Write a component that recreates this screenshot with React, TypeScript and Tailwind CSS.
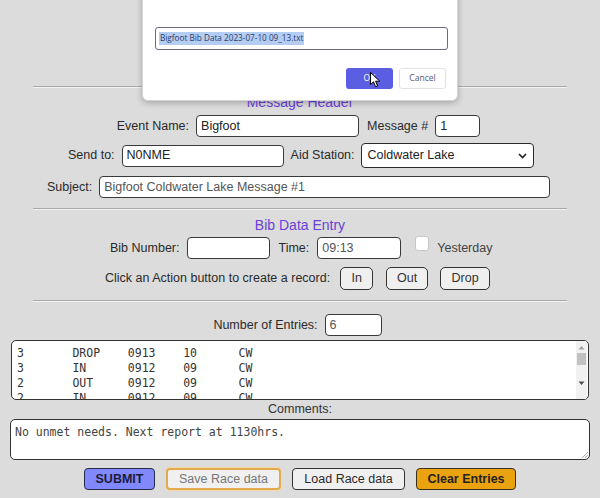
import React from "react";

const inputCls =
  "h-[22px] bg-white border border-[#3a3a3a] rounded-[4px] px-[4px] flex items-center text-[12.5px]";

function Field({ w, value, dim }: { w: string; value?: string; dim?: boolean }) {
  return (
    <div className={`${inputCls} ${w} ${dim ? "text-[#555]" : "text-[#222]"}`}>{value}</div>
  );
}

function Hr() {
  return (
    <div className="mx-[33px] flex flex-col">
      <div className="h-px bg-[#a9a9a9]" />
      <div className="h-px bg-[#f3f3f3]" />
    </div>
  );
}

export default function App() {
  const entries = [
    ["3", "DROP", "0913", "10", "CW"],
    ["3", "IN", "0912", "09", "CW"],
    ["2", "OUT", "0912", "09", "CW"],
    ["2", "IN", "0912", "09", "CW"],
  ];
  return (
    <div
      className="relative w-[600px] h-[498px] overflow-hidden bg-[#dcdcdc] text-[12.5px] text-[#2a2a2a]"
      style={{ fontFamily: '"Liberation Sans", Arial, sans-serif' }}
    >
      <div className="flex flex-col">
        <div className="h-[86px]" />
        <Hr />
        {/* Message Header */}
        <div className="h-[27px] flex items-center justify-center pt-[1px] text-[14px] text-[#6b3fd9]">
          Message Header
        </div>
        {/* Row 1 */}
        <div className="h-[22px] flex items-center justify-center gap-[7px] pr-[3px]">
          <span>Event Name:</span>
          <Field w="w-[163px]" value="Bigfoot" />
          <span className="ml-[1px]">Message #</span>
          <Field w="w-[45px]" value="1" />
        </div>
        {/* Row 2 */}
        <div className="mt-[6px] h-[25px] flex items-center pl-[68px] gap-[7px]">
          <span>Send to:</span>
          <Field w="w-[162px]" value="N0NME" />
          <span>Aid Station:</span>
          <div className="ml-[-1px] h-[25px] w-[173px] bg-white border-[1.5px] border-[#2a2a2a] rounded-[4px] flex items-center justify-between pl-[6px] pr-[6px] text-[#222]">
            <span>Coldwater Lake</span>
            <svg width="9" height="6" viewBox="0 0 9 6">
              <path d="M1 1 L4.5 4.5 L8 1" fill="none" stroke="#222" strokeWidth="1.6" />
            </svg>
          </div>
        </div>
        {/* Row 3 */}
        <div className="mt-[8px] h-[22px] flex items-center pl-[47px] gap-[7px]">
          <span>Subject:</span>
          <Field w="w-[451px]" value="Bigfoot Coldwater Lake Message #1" dim />
        </div>
        <div className="h-[10px]" />
        <Hr />
        {/* Bib Data Entry */}
        <div className="h-[27px] flex items-center justify-center pt-[3px] text-[14px] text-[#6b3fd9]">
          Bib Data Entry
        </div>
        <div className="h-[22px] flex items-center pl-[110px] gap-[8px]">
          <span>Bib Number:</span>
          <Field w="w-[83px]" />
          <span>Time:</span>
          <Field w="w-[84px]" value="09:13" dim />
          <div className="ml-[6px] self-start mt-[-1px] w-[14px] h-[15px] bg-white border border-[#c8c8c8] rounded-[3px]" />
          <span className="text-[#444]">Yesterday</span>
        </div>
        <div className="mt-[8px] h-[23px] flex items-center pl-[105px] gap-[7px]">
          <span className="mr-[3px]">Click an Action button to create a record:</span>
          <button className="h-[23px] w-[33px] bg-[#efefef] border border-[#333] rounded-[5px] text-[12.5px] text-[#333]">
            In
          </button>
          <button className="ml-[6px] h-[23px] w-[42px] bg-[#efefef] border border-[#333] rounded-[5px] text-[12.5px] text-[#333]">
            Out
          </button>
          <button className="ml-[5px] h-[23px] w-[50px] bg-[#efefef] border border-[#333] rounded-[5px] text-[12.5px] text-[#333]">
            Drop
          </button>
        </div>
        <div className="h-[10px]" />
        <Hr />
        <div className="mt-[12px] h-[22px] flex items-center justify-center gap-[7px] pr-[5px]">
          <span>Number of Entries:</span>
          <Field w="w-[57px]" value="6" dim />
        </div>
        {/* Entries list */}
        <div className="mt-[4px] mx-[11px] h-[60px] bg-white border-[1.5px] border-[#333] rounded-[5px] overflow-hidden flex">
          <pre
            className="flex-1 pl-[5px] pt-[5px] text-[11.5px] leading-[15px] text-[#333] [tab-size:8]"
            style={{ fontFamily: '"DejaVu Sans Mono", monospace' }}
          >
            {entries.map((r) => r.join("\t")).join("\n")}
          </pre>
          <div className="w-[11px] mr-[1px] bg-[#f1f1f1] flex flex-col items-center">
            <svg width="7" height="5" viewBox="0 0 7 5" className="mt-[4px]">
              <path d="M0.5 4.5 L3.5 1 L6.5 4.5 Z" fill="#a0a0a0" />
            </svg>
            <div className="mt-[3px] w-[9px] h-[12px] bg-[#c1c1c1]" />
            <svg width="7" height="5" viewBox="0 0 7 5" className="mt-[16px]">
              <path d="M0.5 0.5 L3.5 4 L6.5 0.5 Z" fill="#505050" />
            </svg>
          </div>
        </div>
        <div className="h-[19px] flex items-center justify-center text-[#333]">Comments:</div>
        <div className="mx-[10px] h-[41px] bg-white border-[1.5px] border-[#333] rounded-[5px] relative">
          <div
            className="pl-[4px] pt-[5px] text-[11.5px] leading-[15px] text-[#444]"
            style={{ fontFamily: '"DejaVu Sans Mono", monospace' }}
          >
            No unmet needs. Next report at 1130hrs.
          </div>
          <svg width="6" height="6" viewBox="0 0 6 6" className="absolute right-[1px] bottom-[1px]">
            <path d="M0 6 L6 0 M3 6 L6 3" stroke="#999" strokeWidth="0.8" />
          </svg>
        </div>
        {/* Buttons */}
        <div className="mt-[8px] h-[22px] flex items-center justify-center gap-[11px]">
          <button className="h-[22px] w-[71px] bg-[#8088fb] border border-[#2c2c4a] rounded-[4px] font-bold text-[12.5px] text-[#1c1c3a]">
            SUBMIT
          </button>
          <button className="h-[22px] w-[115px] bg-[#f0f0f0] border-2 border-[#e2a94f] rounded-[4px] text-[12.5px] text-[#777] shadow-[0_0_0_1px_#f3d9a8]">
            Save Race data
          </button>
          <button className="h-[22px] w-[113px] bg-[#f0f0f0] border border-[#333] rounded-[4px] text-[12.5px] text-[#2a2a2a]">
            Load Race data
          </button>
          <button className="h-[22px] w-[100px] bg-[#eaa20e] border border-[#3a3020] rounded-[4px] font-bold text-[12.5px] text-[#222]">
            Clear Entries
          </button>
        </div>
      </div>

      {/* Save dialog overlay */}
      <div className="absolute left-[142px] top-[-10px] w-[316px] h-[111px] bg-white rounded-[6px] border border-[#d4d4d4] shadow-[0_2px_6px_rgba(0,0,0,0.25)]">
        <div
          className="absolute left-[12px] top-[36px] w-[293px] h-[23px] border-[1.5px] border-[#6b6a86] rounded-[3px] flex items-center pl-[3px] text-[8.2px] text-[#2d3b6a]"
          style={{ fontFamily: '"Open Sans", "Noto Sans", sans-serif' }}
        >
          <span className="bg-[#b4cdf2] px-px">Bigfoot Bib Data 2023-07-10 09_13.txt</span>
        </div>
        <div
          className="absolute right-[11px] top-[77px] flex gap-[6px] text-[8.5px]"
          style={{ fontFamily: '"Open Sans", "Noto Sans", sans-serif' }}
        >
          <div className="w-[47px] h-[21px] bg-[#5a5ee2] rounded-[3px] flex items-center justify-center text-white">
            OK
          </div>
          <div className="w-[47px] h-[21px] bg-white border border-[#e2e2e2] rounded-[3px] flex items-center justify-center text-[#555a6e]">
            Cancel
          </div>
        </div>
        <svg
          width="11"
          height="16"
          viewBox="0 0 11 16"
          className="absolute left-[227px] top-[81px]"
        >
          <path
            d="M0.5 0.5 L0.5 12.5 L3.5 9.8 L5.6 14.8 L7.6 14 L5.6 9.2 L9.8 9.2 Z"
            fill="white"
            stroke="black"
            strokeWidth="1"
            strokeLinejoin="round"
          />
        </svg>
      </div>
    </div>
  );
}
